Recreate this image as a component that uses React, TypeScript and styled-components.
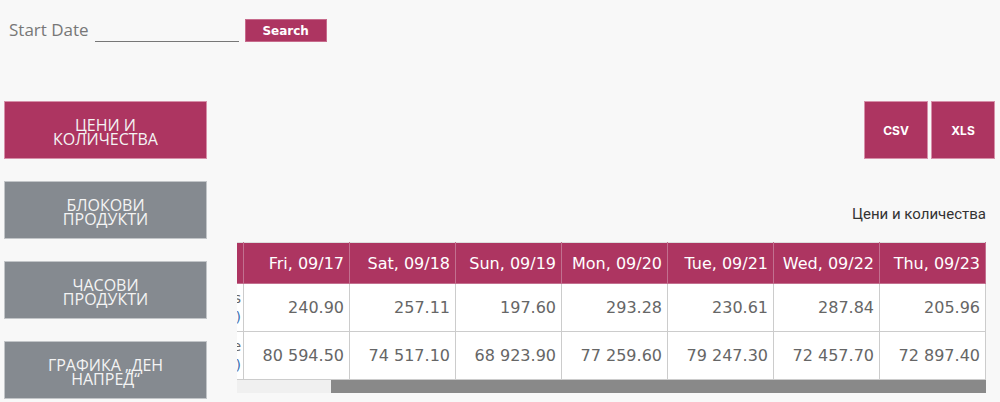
import { useEffect, useRef, useState } from 'react';
import styled, { createGlobalStyle } from 'styled-components';

const PINK = '#ad3561';
const GREY = '#858a90';

const GlobalStyle = createGlobalStyle`
    html, body {
        margin: 0;
        padding: 0;
        background: #f8f8f8;
    }
`;

const Page = styled.div`
    font-family: 'Open Sans', sans-serif;
    width: 1000px;
    height: 402px;
    overflow: hidden;
`;

const SearchForm = styled.form`
    display: flex;
    align-items: flex-end;
    padding: 19px 0 0 9px;
    height: 23px;
`;

const FieldLabel = styled.label`
    font-size: 17px;
    color: #777;
    line-height: 20px;
    margin-bottom: 2px;
`;

const DateInput = styled.input`
    width: 144px;
    height: 20px;
    margin: 0 0 0 6px;
    padding: 0;
    border: none;
    border-bottom: 1px solid #777;
    background: transparent;
    outline: none;
`;

const SearchButton = styled.button`
    width: 82px;
    height: 23px;
    margin-left: 6px;
    border: 1px solid #c76b8c;
    background: ${PINK};
    color: #fff;
    font-family: 'DejaVu Sans', Verdana, sans-serif;
    font-weight: bold;
    font-size: 12px;
    padding: 0;
    cursor: pointer;
`;

const Main = styled.div`
    display: flex;
    margin-top: 59px;
`;

const SideNav = styled.nav`
    display: flex;
    flex-direction: column;
    gap: 22px;
    padding-left: 4px;
    width: 203px;
    flex-shrink: 0;
`;

const NavButton = styled.a<{ $active?: boolean }>`
    box-sizing: border-box;
    display: flex;
    align-items: center;
    justify-content: center;
    text-align: center;
    height: 58px;
    border: 1px solid ${p => (p.$active ? '#d690a9' : '#c2c5c8')};
    background: ${p => (p.$active ? PINK : GREY)};
    color: #f4f4f4;
    font-size: 16px;
    line-height: 14px;
    text-transform: uppercase;
    text-decoration: none;
    padding: 3px 30px 0;
`;

const Content = styled.section`
    flex: 1;
    min-width: 0;
    margin-left: 30px;
    padding-right: 5px;
`;

const ExportBar = styled.div`
    display: flex;
    justify-content: flex-end;
    gap: 3px;
`;

const ExportButton = styled.button`
    width: 64px;
    height: 58px;
    border: 1px solid #d690a9;
    background: ${PINK};
    color: #fff;
    font-family: Inter, sans-serif;
    font-weight: 700;
    font-size: 12px;
    padding: 0;
`;

const TableTitle = styled.div`
    font-family: Roboto, sans-serif;
    font-size: 15px;
    line-height: 20px;
    color: #333;
    text-align: right;
    margin: 45px 9px 18px 0;
`;

const TableFrame = styled.div`
    margin-right: 9px;
`;

const ScrollBox = styled.div`
    overflow: hidden;
`;

const ScrollTrack = styled.div`
    height: 13px;
    background: #f0f0f0;
`;

const ScrollThumb = styled.div`
    height: 100%;
    background: #898989;
`;

const Table = styled.table`
    border-collapse: collapse;
    table-layout: fixed;
    width: 855px;
    font-family: 'DejaVu Sans', Verdana, sans-serif;
    font-size: 16px;
    white-space: nowrap;
`;

const HeadCell = styled.th<{ $label?: boolean }>`
    box-sizing: border-box;
    background: ${PINK};
    color: #fff;
    font-weight: normal;
    font-size: 16px;
    text-align: right;
    height: 41px;
    padding: 0 5px 0 0;
    width: ${p => (p.$label ? '113px' : '106px')};
    border: 1px solid #c2708f;
    border-top-color: #ddd;
`;

const Cell = styled.td`
    background: #fff;
    color: #666;
    font-size: 16px;
    text-align: right;
    height: 47px;
    padding: 0 5px 0 0;
    border: 1px solid #ccc;
`;

const RowLabel = styled.td`
    background: #fff;
    color: #666;
    text-align: right;
    padding: 0 2px 0 0;
    line-height: 19px;
    border: 1px solid #ccc;
    font-size: 14px;
    overflow: hidden;

    span {
        display: block;
        color: #3b6fb0;
    }
`;

const DAYS = ['Fri, 09/17', 'Sat, 09/18', 'Sun, 09/19', 'Mon, 09/20', 'Tue, 09/21', 'Wed, 09/22', 'Thu, 09/23'];

const ROWS = [
    { label: 'Prices', unit: '(лв/MWh)', values: ['240.90', '257.11', '197.60', '293.28', '230.61', '287.84', '205.96'] },
    { label: 'Volume', unit: '(MWh)', values: ['80 594.50', '74 517.10', '68 923.90', '77 259.60', '79 247.30', '72 457.70', '72 897.40'] },
];

const NAV = [
    { label: 'Цени и количества', active: true },
    { label: 'Блокови продукти' },
    { label: 'Часови продукти' },
    { label: 'Графика „Ден напред“' },
];

const App = () => {
    const scrollRef = useRef<HTMLDivElement>(null);
    const [thumb, setThumb] = useState({ left: 0, width: 0 });

    useEffect(() => {
        const el = scrollRef.current;
        if (!el) return;
        el.scrollLeft = el.scrollWidth;
        const ratio = el.clientWidth / el.scrollWidth;
        setThumb({ left: el.scrollLeft * ratio, width: el.clientWidth * ratio });
    }, []);

    return (
        <Page>
            <GlobalStyle />
            <SearchForm onSubmit={e => e.preventDefault()}>
                <FieldLabel htmlFor="start-date">Start Date</FieldLabel>
                <DateInput id="start-date" type="text" />
                <SearchButton type="submit">Search</SearchButton>
            </SearchForm>

            <Main>
                <SideNav>
                    {NAV.map((item, key) => (
                        <NavButton href="#" $active={item.active} key={key}>
                            {item.label}
                        </NavButton>
                    ))}
                </SideNav>

                <Content>
                    <ExportBar>
                        <ExportButton>CSV</ExportButton>
                        <ExportButton>XLS</ExportButton>
                    </ExportBar>

                    <TableTitle>Цени и количества</TableTitle>

                    <TableFrame>
                        <ScrollBox ref={scrollRef}>
                            <Table>
                                <thead>
                                    <tr>
                                        <HeadCell $label />
                                        {DAYS.map(day => (
                                            <HeadCell key={day}>{day}</HeadCell>
                                        ))}
                                    </tr>
                                </thead>
                                <tbody>
                                    {ROWS.map(row => (
                                        <tr key={row.label}>
                                            <RowLabel>
                                                {row.label}
                                                <span>{row.unit}</span>
                                            </RowLabel>
                                            {row.values.map((v, i) => (
                                                <Cell key={i}>{v}</Cell>
                                            ))}
                                        </tr>
                                    ))}
                                </tbody>
                            </Table>
                        </ScrollBox>
                        <ScrollTrack>
                            <ScrollThumb style={{ marginLeft: thumb.left, width: thumb.width }} />
                        </ScrollTrack>
                    </TableFrame>
                </Content>
            </Main>
        </Page>
    );
};

export default App;
